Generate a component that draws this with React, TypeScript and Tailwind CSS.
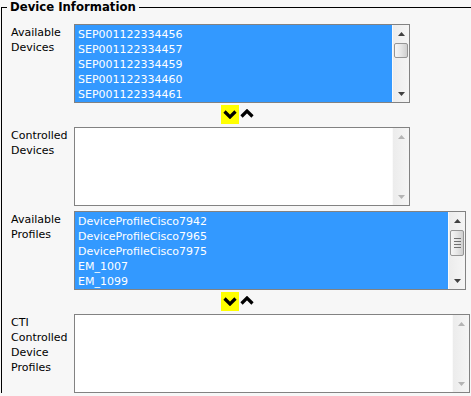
import React from 'react'

type ListProps = {
  items: string[]
  width: string
  thumb?: 'small' | 'grip'
}

function ScrollArrow({ dir, disabled }: { dir: 'up' | 'down'; disabled?: boolean }) {
  const color = disabled ? '#b4b4b4' : '#404040'
  return (
    <svg width="7" height="4" viewBox="0 0 7 4" className="block">
      {dir === 'up'
        ? <polygon points="0,4 3.5,0 7,4" fill={color} />
        : <polygon points="0,0 3.5,4 7,0" fill={color} />}
    </svg>
  )
}

function Scrollbar({ thumb }: { thumb?: 'small' | 'grip' }) {
  const disabled = !thumb
  return (
    <div className="flex w-[17px] shrink-0 flex-col items-center border-l border-[#fafafa] bg-gradient-to-r from-[#ececec] to-[#f5f5f5]">
      <div className="flex h-[17px] items-center justify-center">
        <ScrollArrow dir="up" disabled={disabled} />
      </div>
      <div className="flex-1 w-full px-[1px]">
        {thumb === 'small' && (
          <div className="mt-[1px] h-[15px] rounded-[2px] border border-[#959595] bg-gradient-to-r from-[#f6f6f6] via-[#e6e6e6] to-[#cfcfcf]" />
        )}
        {thumb === 'grip' && (
          <div className="mt-[1px] flex h-[26px] flex-col items-center justify-center gap-[2px] rounded-[2px] border border-[#959595] bg-gradient-to-r from-[#f6f6f6] via-[#e6e6e6] to-[#cfcfcf]">
            <div className="h-px w-[7px] bg-[#707070]" />
            <div className="h-px w-[7px] bg-[#707070]" />
            <div className="h-px w-[7px] bg-[#707070]" />
            <div className="h-px w-[7px] bg-[#707070]" />
          </div>
        )}
      </div>
      <div className="flex h-[17px] items-center justify-center">
        <ScrollArrow dir="down" disabled={disabled} />
      </div>
    </div>
  )
}

function ListBox({ items, width, thumb }: ListProps) {
  return (
    <div className={`flex h-[79px] ${width} border border-[#828282] bg-white`}>
      <div className={`flex-1 overflow-hidden pt-[2px] ${items.length ? 'bg-[#3399ff]' : 'bg-white'}`}>
        {items.map(it => (
          <div key={it} className="pl-[3px] whitespace-nowrap text-white">{it}</div>
        ))}
      </div>
      <Scrollbar thumb={thumb} />
    </div>
  )
}

function Chevron({ dir }: { dir: 'up' | 'down' }) {
  return (
    <svg width="14" height="9" viewBox="0 0 14 9" className="block">
      <polyline
        points={dir === 'down' ? '1.5,1.5 7,7 12.5,1.5' : '1.5,7.5 7,2 12.5,7.5'}
        fill="none"
        stroke="#000"
        strokeWidth="3.2"
      />
    </svg>
  )
}

function MoveButtons() {
  return (
    <div className="flex h-[24px] items-start pl-[147px] pt-[2px]">
      <div className="flex h-[19px] w-[18px] items-center justify-center bg-[#ffff00]">
        <Chevron dir="down" />
      </div>
      <div className="ml-[1px] pt-[4px]">
        <Chevron dir="up" />
      </div>
    </div>
  )
}

function Row({ label, children }: { label: string[]; children: React.ReactNode }) {
  return (
    <div className="flex">
      <div className="w-[63px] shrink-0 pt-[1px]">
        {label.map(l => <div key={l}>{l}</div>)}
      </div>
      <div className="flex flex-col">{children}</div>
    </div>
  )
}

export default function App() {
  const devices = ['SEP001122334456', 'SEP001122334457', 'SEP001122334459', 'SEP001122334460', 'SEP001122334461']
  const profiles = ['DeviceProfileCisco7942', 'DeviceProfileCisco7965', 'DeviceProfileCisco7975', 'EM_1007', 'EM_1099']

  return (
    <div className="h-[396px] overflow-hidden bg-[#f7f7f7] font-['DejaVu_Sans',Verdana,sans-serif] text-[11px] leading-[15px] text-black">
      <fieldset className="ml-[1px] border-l border-t border-black pl-[9px] pt-[9px]">
        <legend className="-ml-[4px] px-[3px] text-[11.7px] font-bold">Device Information</legend>

        <Row label={['Available', 'Devices']}>
          <ListBox items={devices} width="w-[336px]" thumb="small" />
          <MoveButtons />
        </Row>

        <Row label={['Controlled', 'Devices']}>
          <ListBox items={[]} width="w-[336px]" />
        </Row>

        <div className="h-[5px]" />

        <Row label={['Available', 'Profiles']}>
          <ListBox items={profiles} width="w-[392px]" thumb="grip" />
          <MoveButtons />
        </Row>

        <Row label={['CTI', 'Controlled', 'Device', 'Profiles']}>
          <ListBox items={[]} width="w-[396px]" />
        </Row>
      </fieldset>
    </div>
  )
}
